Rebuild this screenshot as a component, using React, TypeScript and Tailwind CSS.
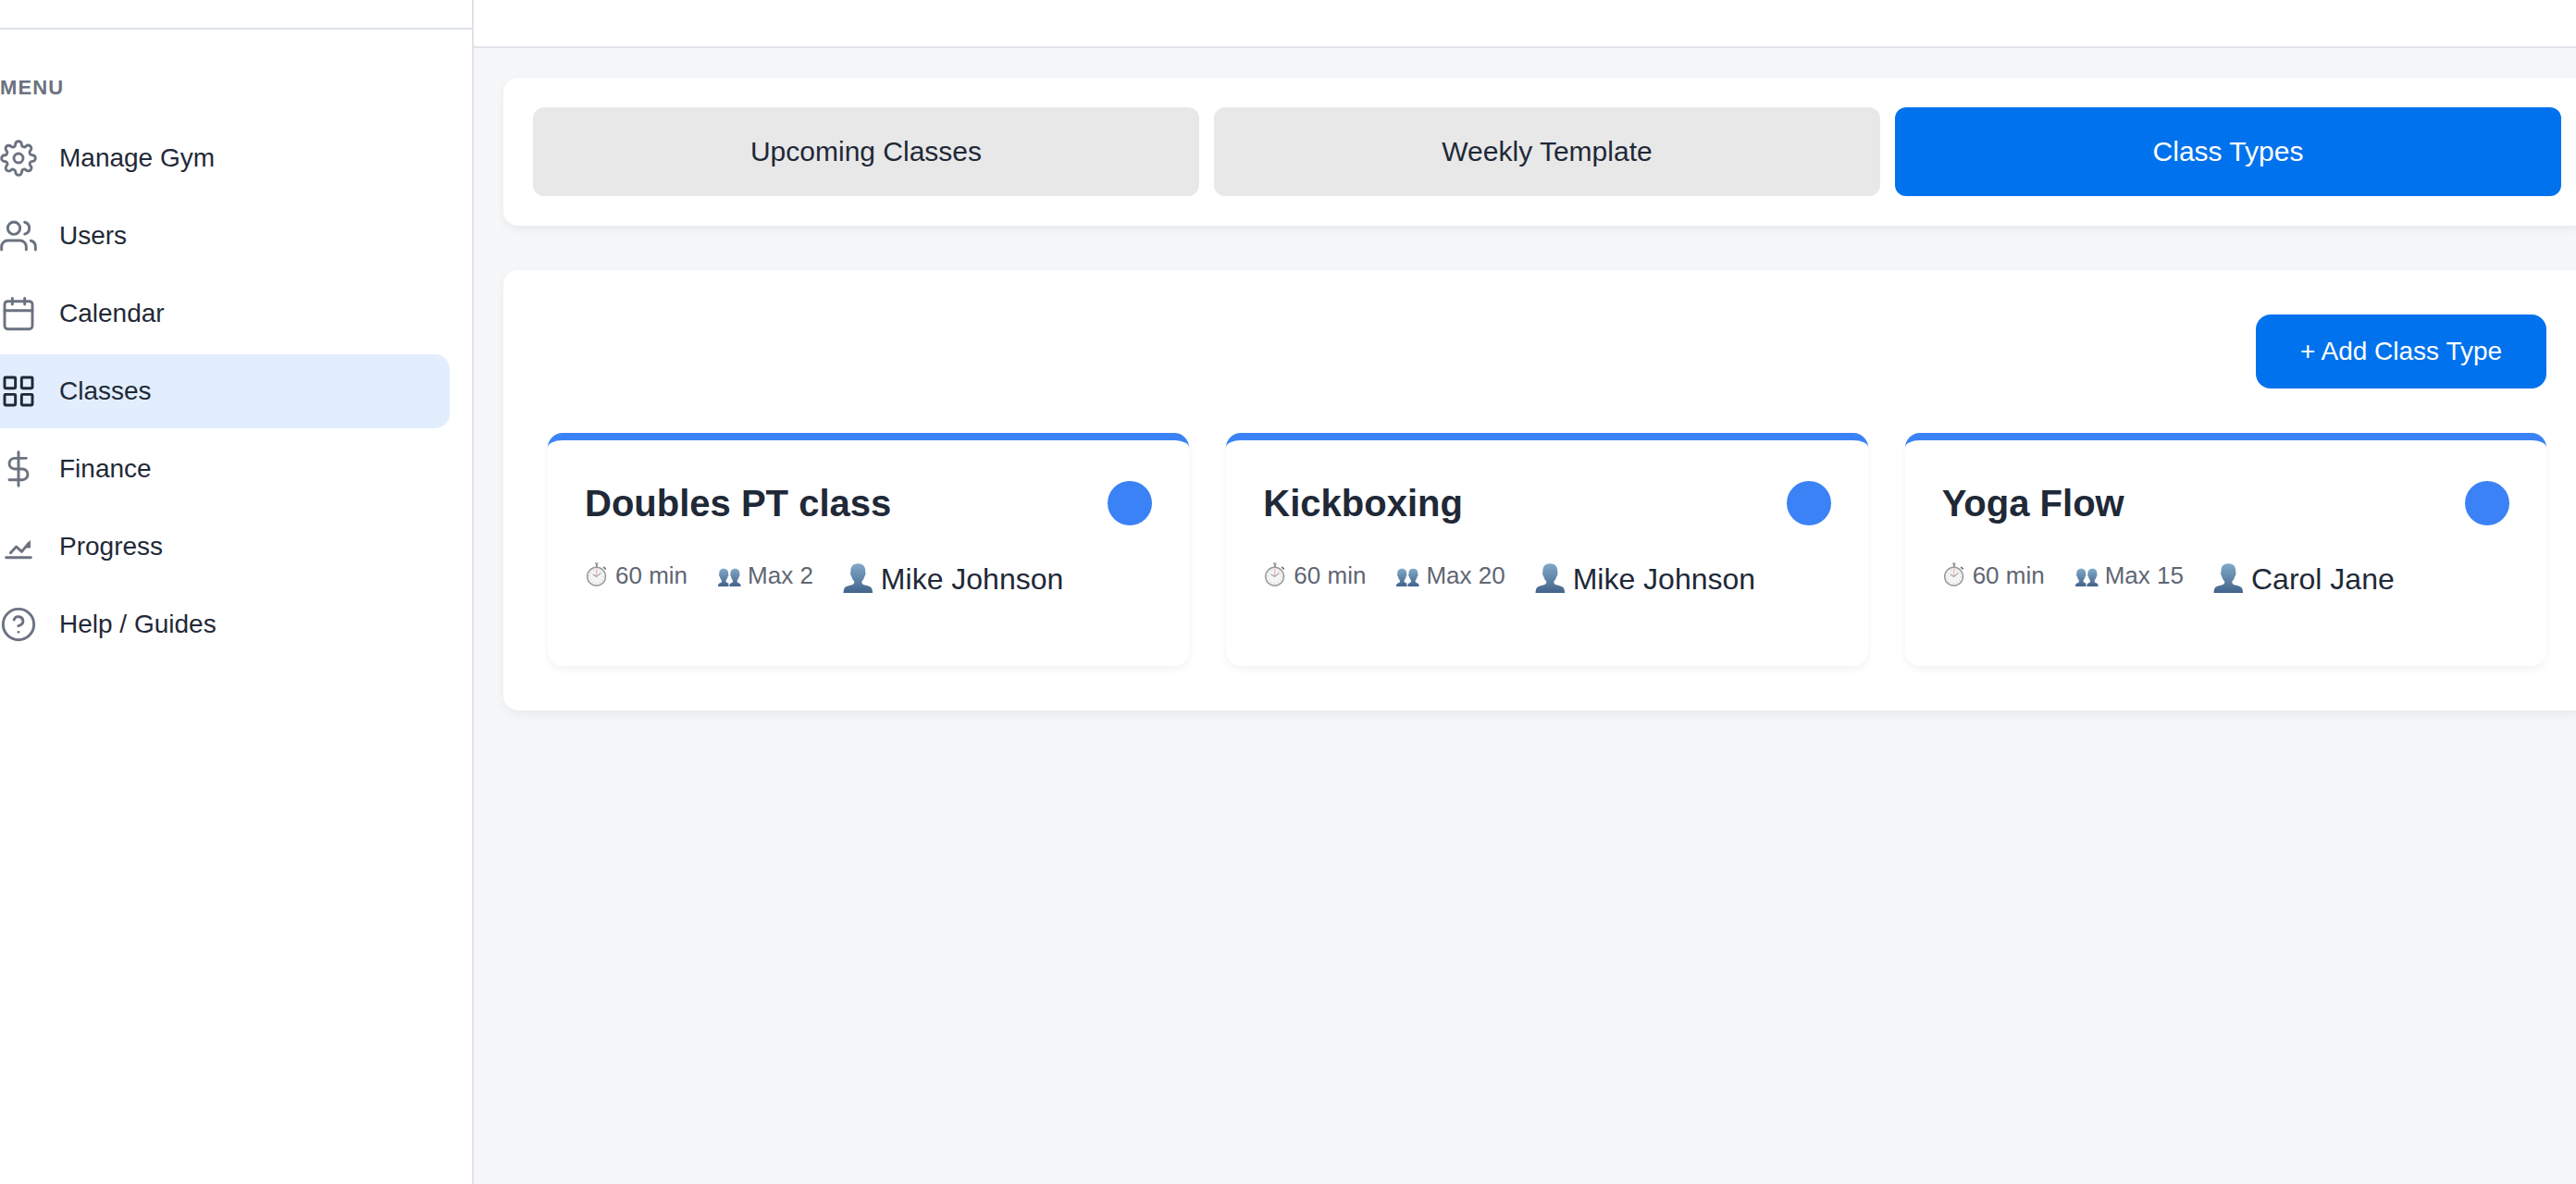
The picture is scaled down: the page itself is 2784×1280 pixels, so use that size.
import React from "react";

const NAV_ITEMS = [
  { label: "Manage Gym", icon: "settings" },
  { label: "Users", icon: "users" },
  { label: "Calendar", icon: "calendar" },
  { label: "Classes", icon: "grid", active: true },
  { label: "Finance", icon: "dollar" },
  { label: "Progress", icon: "progress" },
  { label: "Help / Guides", icon: "help" },
];

const TABS = ["Upcoming Classes", "Weekly Template", "Class Types"];

const CLASS_TYPES = [
  { name: "Doubles PT class", duration: 60, max: 2, coach: "Mike Johnson" },
  { name: "Kickboxing", duration: 60, max: 20, coach: "Mike Johnson" },
  { name: "Yoga Flow", duration: 60, max: 15, coach: "Carol Jane" },
];

const ICONS: Record<string, React.ReactNode> = {
  settings: (
    <>
      <circle cx="12" cy="12" r="3" />
      <path d="M19.4 15a1.65 1.65 0 0 0 .33 1.82l.06.06a2 2 0 0 1 0 2.83 2 2 0 0 1-2.83 0l-.06-.06a1.65 1.65 0 0 0-1.82-.33 1.65 1.65 0 0 0-1 1.51V21a2 2 0 0 1-2 2 2 2 0 0 1-2-2v-.09A1.65 1.65 0 0 0 9 19.4a1.65 1.65 0 0 0-1.82.33l-.06.06a2 2 0 0 1-2.83 0 2 2 0 0 1 0-2.83l.06-.06a1.65 1.65 0 0 0 .33-1.82 1.65 1.65 0 0 0-1.51-1H3a2 2 0 0 1-2-2 2 2 0 0 1 2-2h.09A1.65 1.65 0 0 0 4.6 9a1.65 1.65 0 0 0-.33-1.82l-.06-.06a2 2 0 0 1 0-2.83 2 2 0 0 1 2.83 0l.06.06a1.65 1.65 0 0 0 1.82.33H9a1.65 1.65 0 0 0 1-1.51V3a2 2 0 0 1 2-2 2 2 0 0 1 2 2v.09a1.65 1.65 0 0 0 1 1.51 1.65 1.65 0 0 0 1.82-.33l.06-.06a2 2 0 0 1 2.83 0 2 2 0 0 1 0 2.83l-.06.06a1.65 1.65 0 0 0-.33 1.82V9a1.65 1.65 0 0 0 1.51 1H21a2 2 0 0 1 2 2 2 2 0 0 1-2 2h-.09a1.65 1.65 0 0 0-1.51 1z" />
    </>
  ),
  users: (
    <>
      <path d="M17 21v-2a4 4 0 0 0-4-4H5a4 4 0 0 0-4 4v2" />
      <circle cx="9" cy="7" r="4" />
      <path d="M23 21v-2a4 4 0 0 0-3-3.87" />
      <path d="M16 3.13a4 4 0 0 1 0 7.75" />
    </>
  ),
  calendar: (
    <>
      <rect x="3" y="4" width="18" height="18" rx="2" />
      <path d="M16 2v4M8 2v4M3 10h18" />
    </>
  ),
  grid: (
    <>
      <rect x="3" y="3" width="7" height="7" rx="0.6" />
      <rect x="14" y="3" width="7" height="7" rx="0.6" />
      <rect x="14" y="14" width="7" height="7" rx="0.6" />
      <rect x="3" y="14" width="7" height="7" rx="0.6" />
    </>
  ),
  dollar: <path d="M12 1v22M17 5H9.5a3.5 3.5 0 0 0 0 7h5a3.5 3.5 0 0 1 0 7H6" />,
  progress: (
    <>
      <path d="M4 19h16" />
      <path d="M6.800 16l3.800-4 3.500 3.200L18.500 9.800" />
      <path d="M19.500 8.400v4.200h-3.200z" fill="currentColor" strokeWidth="0.6" />
    </>
  ),
  help: (
    <>
      <circle cx="12" cy="12" r="10" />
      <path d="M9.09 9a3 3 0 0 1 5.83 1c0 2-3 3-3 3M12 17h.01" />
    </>
  ),
};

function NavIcon({ name, active }: { name: string; active?: boolean }) {
  return (
    <svg
      viewBox="0 0 24 24"
      fill="none"
      stroke="currentColor"
      strokeWidth={1.75}
      strokeLinecap="round"
      strokeLinejoin="round"
      className={active ? "size-10 text-[#1f2937]" : "size-10 text-[#6b7280]"}
    >
      {ICONS[name]}
    </svg>
  );
}

function Stopwatch() {
  return (
    <svg viewBox="0 0 26 26" className="mr-[7px] mb-[2px] size-[26px] shrink-0">
      <rect x="11" y="0.2" width="3.600" height="2.200" rx="0.8" fill="#a3a5a8" />
      <rect x="12" y="2" width="1.800" height="3" fill="#85878a" />
      <path d="M20.6 5.400l1.600 1.400" stroke="#77797c" strokeWidth="1.800" strokeLinecap="round" />
      <circle cx="12.6" cy="15.200" r="9.900" fill="#f4f4f4" stroke="#97999b" strokeWidth="1.500" />
      <circle cx="12.6" cy="15.200" r="7.400" fill="none" stroke="#bdbdbd" strokeWidth="1.200" strokeDasharray="0.7 3.175" />
      <path d="M12.7 7.500v8" stroke="#f0b3aa" strokeWidth="1.200" />
      <path d="M8.8 13l3.900 2.400 4.800-4" fill="none" stroke="#85878a" strokeWidth="1" />
    </svg>
  );
}

function BustIcon() {
  return (
    <svg viewBox="0 0 33 32" className="mr-[8px] mb-[2px] h-8 w-[33px] shrink-0">
      <defs>
        <linearGradient id="bust" x1="0" y1="0" x2="0" y2="1">
          <stop offset="0" stopColor="#81a9c8" />
          <stop offset="1" stopColor="#42638a" />
        </linearGradient>
      </defs>
      <path
        d="M16.300 0.300C11.200 0.300 8.400 3.200 8.400 8C8.400 9.200 7.900 10.300 8.200 11.800C8.500 13.200 9.100 14 9.600 15C10.100 17 11 18.400 12.200 19.500C12.500 21.600 11.700 22.800 8.800 23.600C4.500 24.700 2.200 25.200 1.300 27.600C0.800 29 0.600 30.500 0.500 32H32.100C32 30.500 31.800 29 31.300 27.600C30.400 25.200 28.100 24.700 23.800 23.600C20.900 22.800 20.100 21.600 20.400 19.500C21.600 18.400 22.500 17 23 15C23.500 14 24.100 13.200 24.400 11.800C24.700 10.300 24.200 9.200 24.200 8C24.200 3.200 21.400 0.300 16.300 0.300Z"
        fill="url(#bust)"
      />
    </svg>
  );
}

function BustsIcon() {
  return (
    <svg viewBox="0 0 26 26" className="mr-[7px] mb-[2px] size-[26px] shrink-0">
      <defs>
        <linearGradient id="busts" x1="0" y1="0" x2="0" y2="1">
          <stop offset="0" stopColor="#81a9c8" />
          <stop offset="1" stopColor="#42638a" />
        </linearGradient>
      </defs>
      <g fill="url(#busts)">
        <path d="M7.200 6.700C3.800 6.700 2.100 8.900 2.300 12.300C1.700 13.200 2.200 15 3 15.600C3.300 17.300 4 18.500 4.900 19.400C5 21.200 4.600 21.700 3.200 22.300C1.500 23 1 23.800 1 26H12.400V22.600C10 21.700 9.400 21.200 9.600 19.400C10.500 18.500 11.200 17.300 11.500 15.600C12.300 15 12.700 13.200 12.100 12.300C12.300 8.900 10.600 6.700 7.200 6.700Z" />
        <path d="M19.400 6.700C16 6.700 14.300 8.900 14.500 12.300C13.900 13.200 14.300 15 15.100 15.600C15.400 17.300 16.100 18.500 17 19.400C17.200 21.200 16.600 21.700 14.800 22.400C13.700 22.900 13.300 23.800 13.300 26H25.600C25.600 23.800 25.100 23 23.400 22.300C22 21.700 21.600 21.200 21.700 19.400C22.600 18.500 23.300 17.300 23.600 15.600C24.400 15 24.900 13.200 24.300 12.300C24.500 8.900 22.800 6.700 19.400 6.700Z" />
      </g>
    </svg>
  );
}

function Sidebar() {
  return (
    <aside className="w-[512px] shrink-0 border-r-2 border-[#dfe3e8] bg-white">
      <div className="h-8 border-b-2 border-[#dfe3e8]" />
      <nav className="pt-[49px] pr-6">
        <h2 className="h-[50px] text-[22px] leading-7 font-bold tracking-[1.1px] text-[#6b7280]">
          MENU
        </h2>
        <ul className="flex flex-col gap-1">
          {NAV_ITEMS.map((item) => (
            <li
              key={item.label}
              className={
                item.active
                  ? "flex h-20 items-center gap-6 rounded-r-2xl bg-[#e2eefd]"
                  : "flex h-20 items-center gap-6"
              }
            >
              <NavIcon name={item.icon} active={item.active} />
              <span className="text-[28px] leading-none">{item.label}</span>
            </li>
          ))}
        </ul>
      </nav>
    </aside>
  );
}

function ClassCard({ item }: { item: (typeof CLASS_TYPES)[number] }) {
  return (
    <article className="h-[252px] rounded-2xl border-t-8 border-[#3b82f6] bg-white px-10 pt-11 shadow-[0_4px_8px_rgba(0,0,0,0.05)]">
      <div className="flex h-12 items-center justify-between">
        <h3 className="text-[40px] leading-none font-bold">{item.name}</h3>
        <span className="size-12 rounded-full bg-[#3b82f6]" />
      </div>
      <div className="mt-9 flex items-start gap-8">
        <span className="flex h-[36px] items-center text-[26px] text-[#5f6673]">
          <Stopwatch />
          {item.duration} min
        </span>
        <span className="flex h-[36px] items-center text-[26px] text-[#5f6673]">
          <BustsIcon />
          Max {item.max}
        </span>
        <span className="flex h-[44px] items-center text-[32px]">
          <BustIcon />
          {item.coach}
        </span>
      </div>
    </article>
  );
}

function App() {
  return (
    <div className="flex h-screen overflow-hidden bg-[#f5f7f9] font-['Liberation_Sans',Arial,sans-serif] text-[#1f2937]">
      <Sidebar />
      <main className="w-[2320px] shrink-0">
        <header className="h-[52px] border-b-2 border-[#dfe3e8] bg-white" />
        <div className="flex flex-col gap-12 p-8">
          {/* Tabs */}
          <div className="flex h-40 w-[2256px] gap-4 rounded-2xl bg-white p-8 shadow-[0_4px_12px_rgba(0,0,0,0.06)]">
            {TABS.map((tab) => (
              <button
                key={tab}
                className={
                  tab === "Class Types"
                    ? "w-[720px] rounded-xl bg-[#0072ed] pb-[2px] text-[30px] text-white"
                    : "w-[720px] rounded-xl bg-[#e8e8e8] pb-[2px] text-[30px]"
                }
              >
                {tab}
              </button>
            ))}
          </div>
          {/* Class types */}
          <section className="h-[476px] w-[2256px] rounded-2xl bg-white p-12 shadow-[0_4px_12px_rgba(0,0,0,0.06)]">
            <div className="mb-12 flex justify-end">
              <button className="h-20 w-[314px] rounded-2xl bg-[#0072ed] text-[28px] text-white">
                + Add Class Type
              </button>
            </div>
            <div className="grid grid-cols-3 gap-10">
              {CLASS_TYPES.map((item) => (
                <ClassCard key={item.name} item={item} />
              ))}
            </div>
          </section>
        </div>
      </main>
    </div>
  );
}

export default App;
